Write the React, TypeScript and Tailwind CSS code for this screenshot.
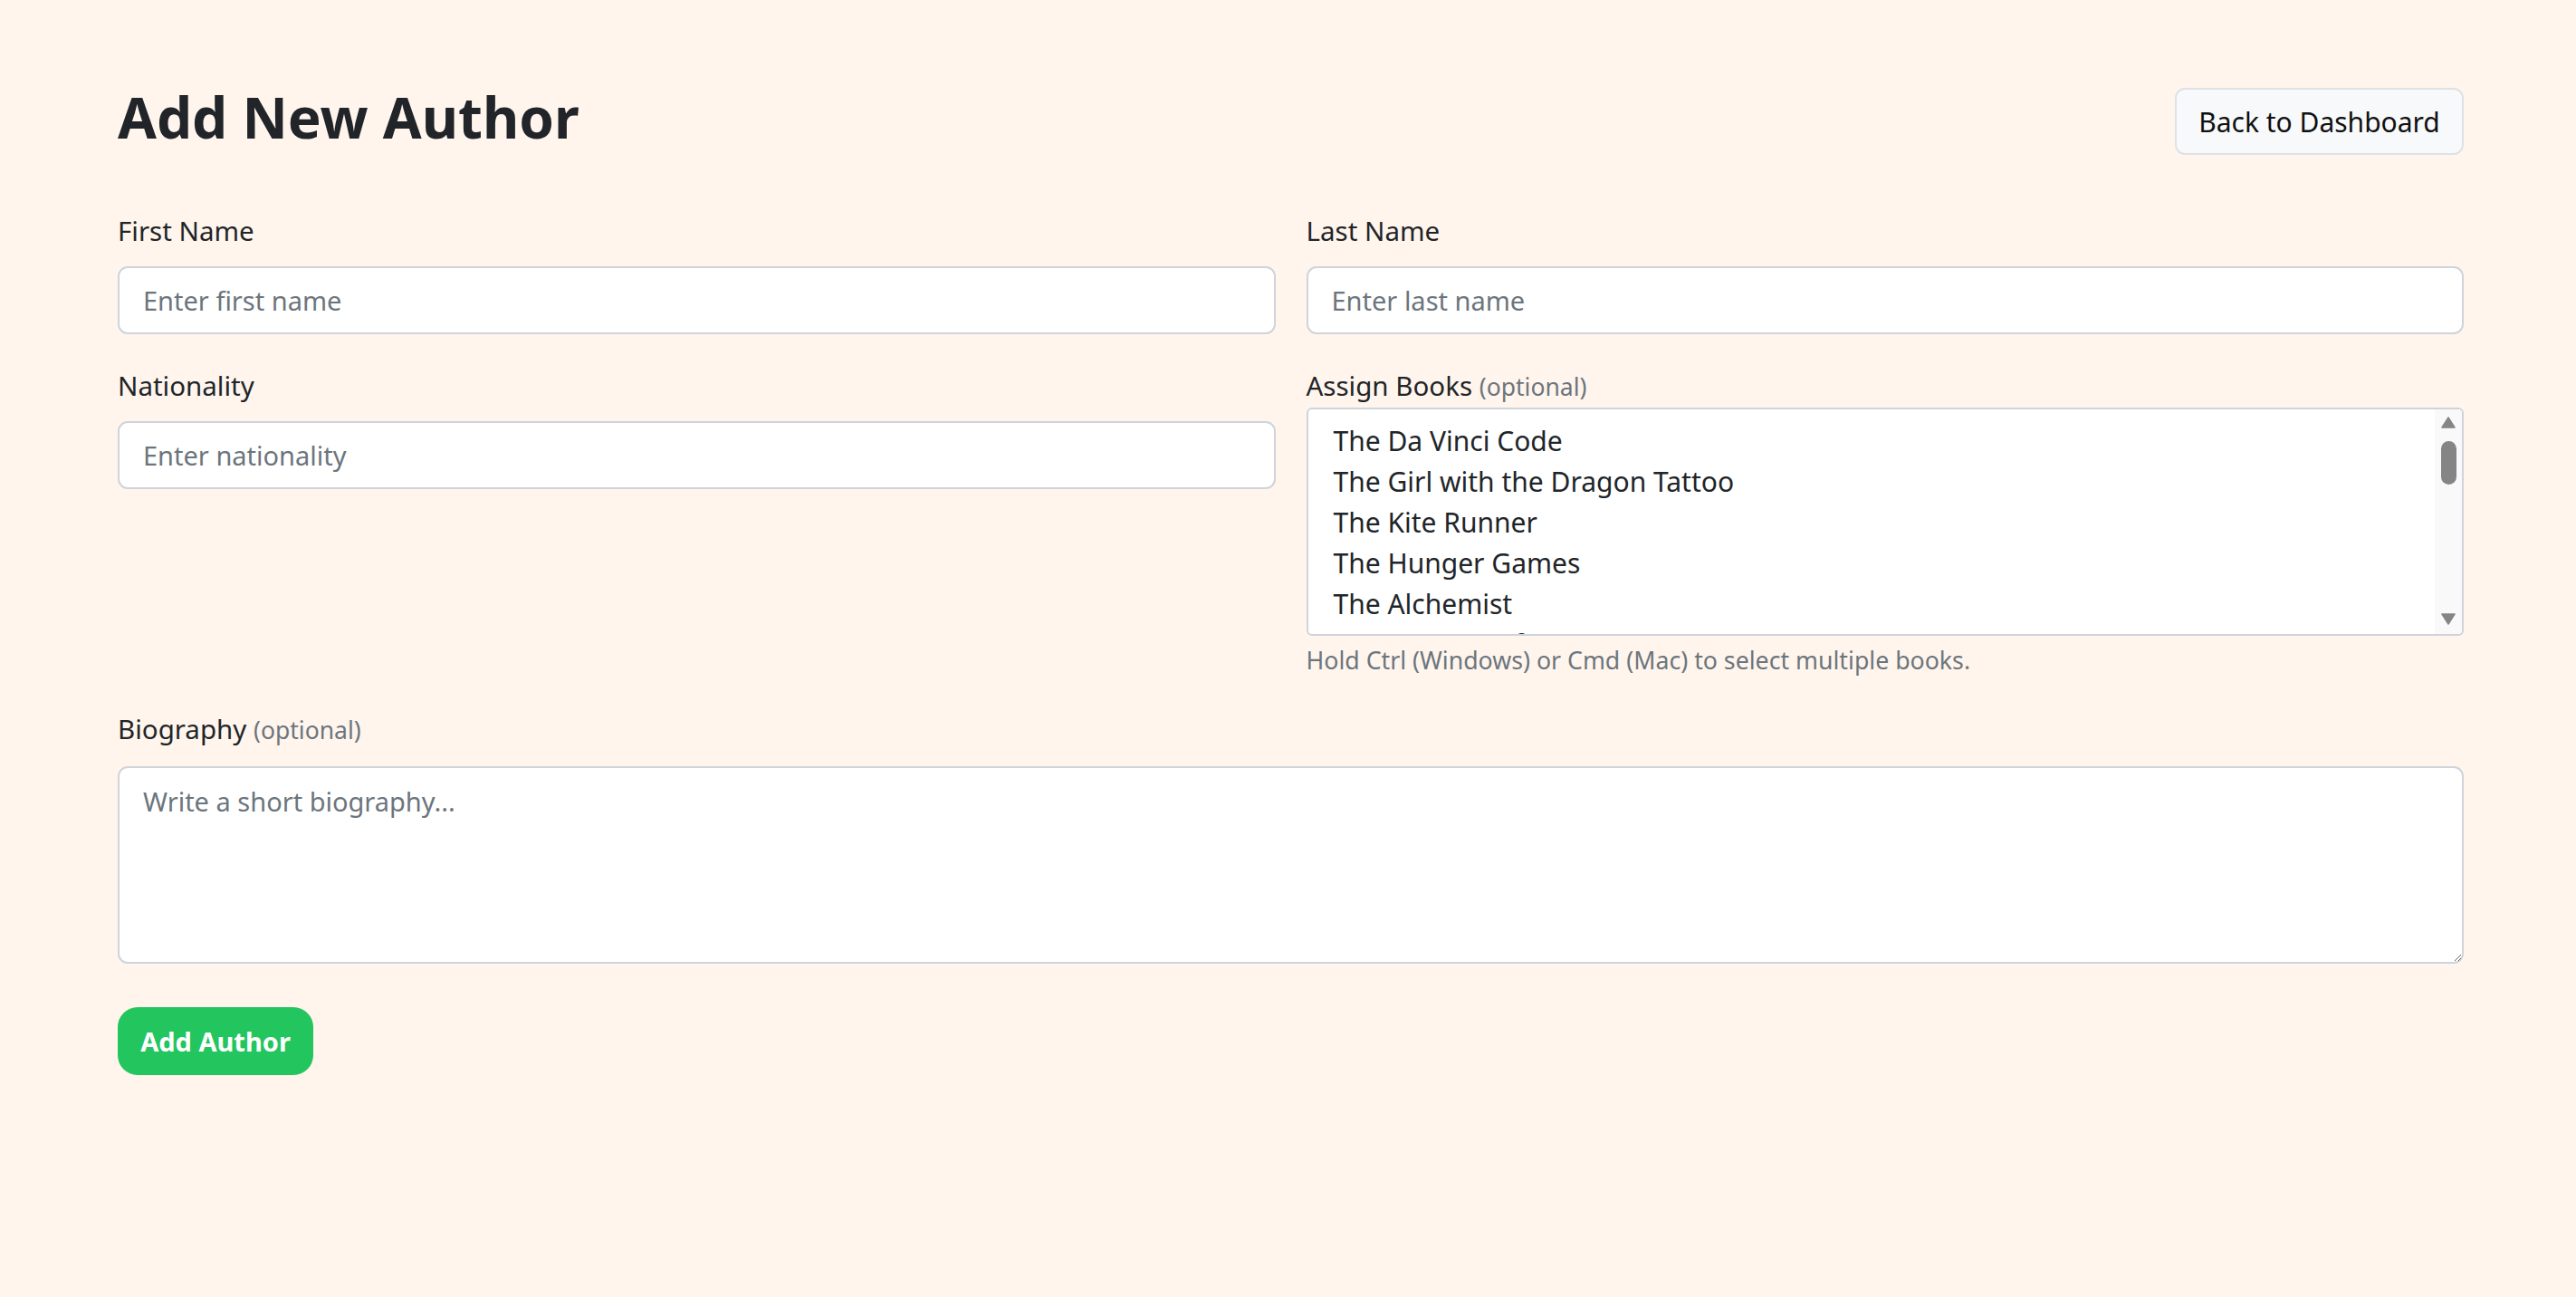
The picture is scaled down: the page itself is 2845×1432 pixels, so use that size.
import React, { useState } from "react";

const books = [
  "The Da Vinci Code",
  "The Girl with the Dragon Tattoo",
  "The Kite Runner",
  "The Hunger Games",
  "The Alchemist",
  "The Book Thief",
];

const AddAuthorPage: React.FC = () => {
  const [firstName, setFirstName] = useState("");
  const [lastName, setLastName] = useState("");
  const [nationality, setNationality] = useState("");
  const [bio, setBio] = useState("");

  return (
    <div className="min-h-screen bg-[#fff5ec] font-['Noto_Sans',sans-serif] text-[#212529]">
      <div className="pl-[130px] pr-[124px] pt-[97px] pb-20">
        {/* Header */}
        <div className="flex items-start justify-between mb-[62px]">
          <h1 className="text-[62px] leading-[64px] font-bold text-[#212529]">Add New Author</h1>
          <button className="w-[319px] h-[74px] bg-[#f8f9fa] border-2 border-[#dee2e6] rounded-[11px] text-[30px] text-[#111]">
            Back to Dashboard
          </button>
        </div>

        {/* Fields */}
        <div className="grid grid-cols-2 gap-x-[34px] gap-y-[35px]">
          <div>
            <label className="block text-[29.5px] leading-[43px] mb-[18px]">First Name</label>
            <input
              value={firstName}
              onChange={e => setFirstName(e.target.value)}
              placeholder="Enter first name"
              className="w-full h-[75px] bg-white border-2 border-[#ced4da] rounded-[11px] px-[26px] text-[29px] outline-none placeholder:text-[#6c757d]"
            />
          </div>
          <div>
            <label className="block text-[29.5px] leading-[43px] mb-[18px]">Last Name</label>
            <input
              value={lastName}
              onChange={e => setLastName(e.target.value)}
              placeholder="Enter last name"
              className="w-full h-[75px] bg-white border-2 border-[#ced4da] rounded-[11px] px-[26px] text-[29px] outline-none placeholder:text-[#6c757d]"
            />
          </div>
          <div>
            <label className="block text-[29.5px] leading-[43px] mb-[18px]">Nationality</label>
            <input
              value={nationality}
              onChange={e => setNationality(e.target.value)}
              placeholder="Enter nationality"
              className="w-full h-[75px] bg-white border-2 border-[#ced4da] rounded-[11px] px-[26px] text-[29px] outline-none placeholder:text-[#6c757d]"
            />
          </div>
          <div>
            <label className="block text-[29.5px] leading-[43px] mb-[1px]">
              Assign Books <span className="text-[26.5px] text-[#6c757d]">(optional)</span>
            </label>
            {/* multi select with classic scrollbar */}
            <div className="flex h-[252px] bg-white border-2 border-[#ced4da] rounded-[6px] overflow-hidden">
              <ul className="flex-1 overflow-hidden pt-[12px] pl-[28px]">
                {books.map(b => (
                  <li key={b} className="h-[45px] leading-[45px] text-[30px] text-[#212529] whitespace-nowrap">
                    {b}
                  </li>
                ))}
              </ul>
              <div className="w-[30px] bg-[#f9f9f9] flex flex-col items-center pt-[8px] pb-[10px]">
                <svg width="16" height="13" viewBox="0 0 16 13">
                  <path d="M8 1 L15 12 L1 12 Z" fill="#858585" stroke="#858585" strokeLinejoin="round" strokeWidth="1.5" />
                </svg>
                <div className="w-[17px] h-[48px] mt-[14px] rounded-full bg-[#858585]" />
                <div className="flex-1" />
                <svg width="16" height="13" viewBox="0 0 16 13">
                  <path d="M1 1 L15 1 L8 12 Z" fill="#858585" stroke="#858585" strokeLinejoin="round" strokeWidth="1.5" />
                </svg>
              </div>
            </div>
            <p className="mt-[8px] text-[26.7px] leading-[38px] text-[#6c757d]">
              Hold Ctrl (Windows) or Cmd (Mac) to select multiple books.
            </p>
          </div>
          <div className="col-span-2">
            <label className="block text-[29.5px] leading-[43px] mb-[18px]">
              Biography <span className="text-[26.5px] text-[#6c757d]">(optional)</span>
            </label>
            <textarea
              value={bio}
              onChange={e => setBio(e.target.value)}
              placeholder="Write a short biography..."
              className="block w-full h-[218px] bg-white border-2 border-[#ced4da] rounded-[11px] px-[26px] py-[15px] text-[29px] leading-[43px] outline-none placeholder:text-[#6c757d]"
            />
          </div>
        </div>

        <button className="mt-[48px] w-[216px] h-[75px] bg-[#22c55e] rounded-[22px] text-white text-[29px] font-bold">
          Add Author
        </button>
      </div>
    </div>
  );
};

export default function App() {
  return <AddAuthorPage />;
}
